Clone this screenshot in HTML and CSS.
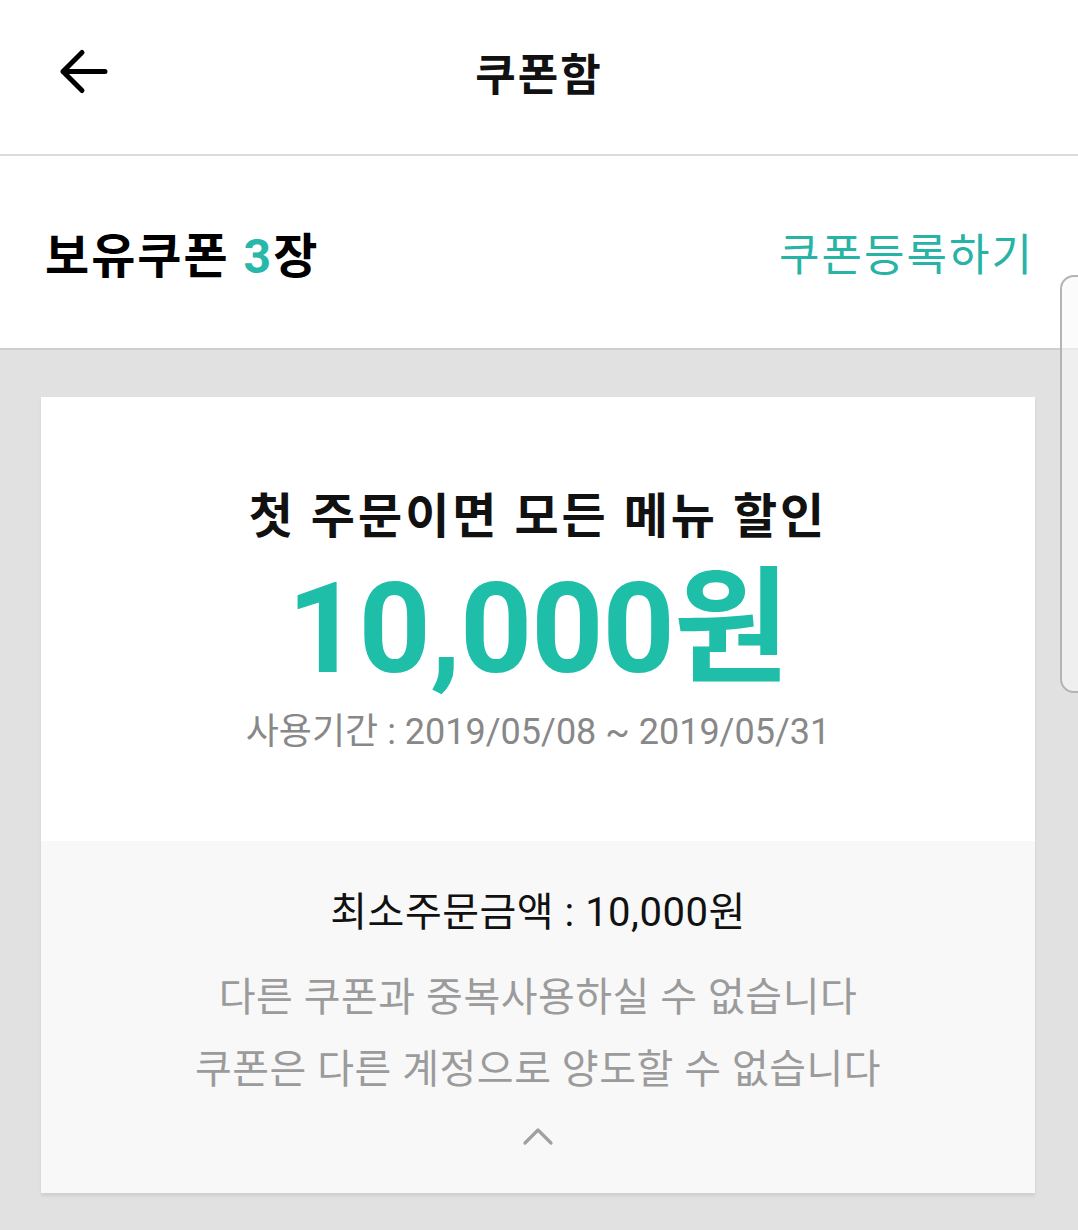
FILE: index.html
```html
<!DOCTYPE html>
<html lang="ko">
<head>
  <meta charset="UTF-8">
  <meta name="viewport" content="width=device-width, initial-scale=1.0">
  <title>쿠폰함</title>
  <link rel="stylesheet" href="styles.css">
</head>
<body>

  <header class="top-bar">
    <button class="back-btn" aria-label="뒤로">
      <svg width="50" height="50" viewBox="0 0 50 50">
        <path d="M47 24.5H5M24 5.5L5 24.5L24 43.5" fill="none" stroke="#000" stroke-width="5" stroke-linecap="round" stroke-linejoin="round"/>
      </svg>
    </button>
    <h1 class="top-title">쿠폰함</h1>
  </header>

  <div class="coupon-head">
    <h2 class="coupon-count">보유쿠폰 <span class="accent">3</span>장</h2>
    <a class="register-link" href="#">쿠폰등록하기</a>
  </div>

  <main class="coupon-list">
    <div class="coupon-card">
      <div class="coupon-main">
        <p class="coupon-name">첫 주문이면 모든 메뉴 할인</p>
        <p class="coupon-amount">10,000원</p>
        <p class="coupon-period">사용기간 : 2019/05/08 ~ 2019/05/31</p>
      </div>
      <div class="coupon-detail">
        <p class="min-order">최소주문금액 : 10,000원</p>
        <p class="notice">다른 쿠폰과 중복사용하실 수 없습니다</p>
        <p class="notice">쿠폰은 다른 계정으로 양도할 수 없습니다</p>
        <svg class="fold-icon" width="32" height="22" viewBox="0 0 32 22">
          <path d="M3 18L16 5L29 18" fill="none" stroke="#a0a0a0" stroke-width="3.2" stroke-linecap="round" stroke-linejoin="round"/>
        </svg>
      </div>
    </div>
  </main>

  <div class="fast-scroll"></div>

</body>
</html>
```

FILE: styles.css
```css
html, body {
  height: 100%;
}
body {
  margin: 0;
  font-family: Roboto, "Noto Sans CJK KR", sans-serif;
  background-color: #e1e1e1;
  overflow: hidden;
  position: relative;
}
p, h1, h2 {
  margin: 0;
}

.top-bar {
  height: 144px;
  padding-bottom: 10px;
  border-bottom: 2px solid #dcdcdc;
  background-color: #fff;
  display: flex;
  align-items: center;
  position: relative;
}
.back-btn {
  background: none;
  border: 0;
  padding: 0;
  margin-left: 58px;
  width: 50px;
  height: 50px;
  display: flex;
}
.top-title {
  position: absolute;
  left: 0;
  right: 0;
  top: 0;
  bottom: 10px;
  display: flex;
  align-items: center;
  justify-content: center;
  font-size: 44px;
  font-weight: 700;
  letter-spacing: 2px;
  color: #111;
  pointer-events: none;
}

.coupon-head {
  height: 192px;
  background-color: #fff;
  border-bottom: 2px solid #cfcfcf;
  display: flex;
  align-items: center;
  justify-content: space-between;
  padding: 0 46px 0 45px;
}
.coupon-count {
  font-size: 48px;
  font-weight: 700;
  color: #000;
  letter-spacing: 2px;
}
.accent {
  color: #27b8a9;
}
.register-link {
  font-size: 44px;
  color: #27b3a6;
  text-decoration: none;
  letter-spacing: 2px;
  margin-right: -2px;
}

.coupon-list {
  padding: 47px 43px 0 41px;
}
.coupon-card {
  background-color: #fff;
  box-shadow: 0 3px 3px rgba(0, 0, 0, 0.08);
}
.coupon-main {
  padding: 90px 0 87px;
  display: flex;
  flex-direction: column;
  align-items: center;
}
.coupon-name {
  font-size: 48px;
  font-weight: 700;
  line-height: 60px;
  color: #111;
  letter-spacing: 3px;
}
.coupon-amount {
  margin-top: 17px;
  font-size: 126px;
  font-weight: 700;
  line-height: 130px;
  color: #1ebea9;
  letter-spacing: -1px;
}
.coupon-period {
  margin-top: 16px;
  font-size: 36px;
  line-height: 44px;
  color: #888;
}

.coupon-detail {
  background-color: #f8f8f8;
  padding: 47px 0 46px;
  display: flex;
  flex-direction: column;
  align-items: center;
}
.min-order {
  font-size: 40px;
  line-height: 50px;
  color: #111;
  margin-bottom: 24px;
  letter-spacing: 0.5px;
}
.notice {
  font-size: 40px;
  line-height: 72px;
  color: #9b9b9b;
  letter-spacing: 0.5px;
}
.fold-icon {
  margin-top: 19px;
}

.fast-scroll {
  position: absolute;
  top: 275px;
  right: -14px;
  width: 28px;
  height: 414px;
  border: 2px solid #b4b4b4;
  border-radius: 14px;
  background-color: rgba(248, 248, 248, 0.6);
}
```
